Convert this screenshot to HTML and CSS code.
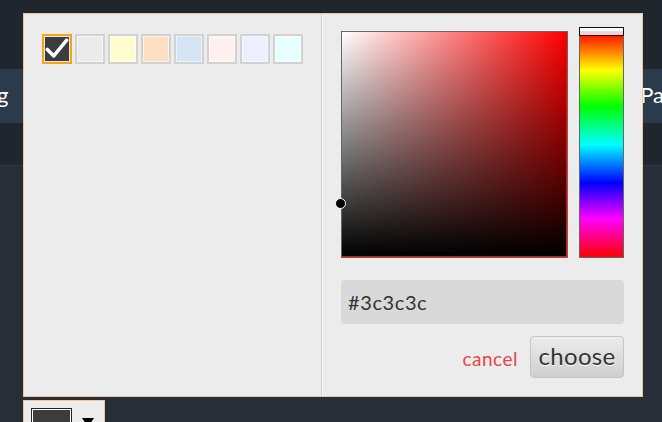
FILE: index.html
```html
<!DOCTYPE html>
<html>
<head>
<meta charset="utf-8">
<link rel="stylesheet" href="styles.css">
</head>
<body>
<div class="page">
  <div class="topbar"></div>
  <div class="navband">
    <span class="nav-left">g</span>
    <span class="nav-right">Pa</span>
  </div>
  <div class="subbar"></div>
  <div class="content"></div>
</div>

<div class="picker">
  <div class="popup">
    <div class="pane-left">
      <div class="swatches">
        <div class="swatch selected" style="background:#3c3c3c">
          <svg viewBox="0 0 26 26" width="24" height="24"><path d="M2.5 13.5 L9.5 20.5 L23.5 3.5" fill="none" stroke="#fff" stroke-width="3.8" stroke-linecap="round" stroke-linejoin="round"/></svg>
        </div>
        <div class="swatch" style="background:#ebebeb"></div>
        <div class="swatch" style="background:#fffdd0"></div>
        <div class="swatch" style="background:#ffdfc4"></div>
        <div class="swatch" style="background:#d5e4f3"></div>
        <div class="swatch" style="background:#fff0ef"></div>
        <div class="swatch" style="background:#ebefff"></div>
        <div class="swatch" style="background:#e6ffff"></div>
      </div>
    </div>
    <div class="divider"></div>
    <div class="pane-right">
      <div class="pickers">
        <div class="sv">
          <div class="sv-grad"></div>
          <div class="sv-marker"></div>
        </div>
        <div class="hue">
          <div class="hue-marker"></div>
        </div>
      </div>
      <div class="hex">#3c3c3c</div>
      <div class="actions">
        <span class="cancel">cancel</span>
        <span class="choose">choose</span>
      </div>
    </div>
  </div>
  <div class="trigger">
    <div class="trigger-swatch"></div>
    <span class="trigger-arrow"></span>
  </div>
</div>
</body>
</html>
```

FILE: styles.css
```css
html, body {
  margin: 0;
  padding: 0;
}
body {
  width: 662px;
  height: 422px;
  overflow: hidden;
  background: #272e37;
  font-family: Lato, "Open Sans", sans-serif;
  position: relative;
}
.page {
  display: flex;
  flex-direction: column;
  height: 422px;
}
.topbar {
  height: 69px;
  background: #20262e;
}
.navband {
  height: 54px;
  background: #2b3b4e;
  display: flex;
  justify-content: space-between;
  align-items: center;
  color: #fff;
  font-size: 22px;
  overflow: hidden;
}
.nav-left {
  margin-left: -3px;
  line-height: 1;
  margin-top: -2px;
}
.nav-right {
  margin-right: -2px;
  line-height: 1;
  margin-top: -2px;
}
.subbar {
  height: 42px;
  background: #20262e;
  border-bottom: 1px solid #2e353e;
}
.content {
  flex: 1;
  background: #272e37;
}

.picker {
  position: absolute;
  left: 23px;
  top: 13px;
  display: flex;
  flex-direction: column;
  gap: 3px;
  align-items: flex-start;
}
.popup {
  width: 618px;
  height: 382px;
  border: 1px solid #f2c59b;
  background: #ececec;
  display: flex;
}
.pane-left {
  width: 298px;
  padding: 20px 0 0 18px;
  box-sizing: border-box;
}
.swatches {
  display: flex;
  gap: 3px;
}
.swatch {
  width: 30px;
  height: 30px;
  box-sizing: border-box;
  border: 2px solid #d2d2d2;
  box-shadow: inset 0 0 0 1px rgba(255,255,255,0.55);
  display: flex;
  align-items: center;
  justify-content: center;
}
.swatch.selected {
  border-color: #f7a21b;
  box-shadow: inset 0 0 0 1px #e8e8e8;
}
.divider {
  width: 1px;
  background: #cfcfcf;
  border-right: 1px solid #f8f8f8;
}
.pane-right {
  flex: 1;
  padding: 17px 18px 0 18px;
  display: flex;
  flex-direction: column;
}
.pickers {
  display: flex;
  gap: 11px;
}
.sv {
  width: 225px;
  height: 225px;
  border: 1px solid #666;
  background: #ff0000;
  position: relative;
}
.sv-grad {
  width: 224px;
  height: 224px;
  background:
    linear-gradient(to top, #000, rgba(0,0,0,0)),
    linear-gradient(to right, #fff, rgba(255,255,255,0));
}
.sv-marker {
  position: absolute;
  left: -7px;
  top: 166px;
  width: 9px;
  height: 9px;
  border-radius: 50%;
  background: #000;
  border: 1px solid #fff;
}
.hue {
  width: 43px;
  height: 225px;
  border: 1px solid #666;
  position: relative;
  background: linear-gradient(to bottom, #f00 0%, #ff0 17%, #0f0 33%, #0ff 50%, #00f 67%, #f0f 83%, #f00 100%);
}
.hue-marker {
  position: absolute;
  left: -1px;
  top: -5px;
  width: 43px;
  height: 7px;
  border: 1px solid #111;
  background: rgba(255,255,255,0.8);
}
.hex {
  margin-top: 22px;
  height: 44px;
  background: #d9d9d9;
  border-radius: 4px;
  display: flex;
  align-items: center;
  padding-left: 7px;
  font-size: 20px;
  color: #333;
  letter-spacing: 0.6px;
}
.actions {
  margin-top: 12px;
  display: flex;
  justify-content: flex-end;
  align-items: center;
  gap: 12px;
}
.cancel {
  color: #e2474b;
  font-size: 19px;
  letter-spacing: 0.5px;
  margin-top: 2px;
}
.choose {
  width: 94px;
  height: 42px;
  box-sizing: border-box;
  border: 1px solid #c4c4c4;
  border-radius: 4px;
  background: linear-gradient(to bottom, #ececec, #cfcfcf);
  display: flex;
  align-items: center;
  justify-content: center;
  padding-bottom: 3px;
  font-size: 24px;
  color: #333;
  text-shadow: 0 1px 0 #fff;
  letter-spacing: 0.3px;
}
.trigger {
  width: 82px;
  height: 30px;
  border: 1px solid #f2c59b;
  background: #ececec;
  display: flex;
  padding: 7px 0 0 7px;
  box-sizing: border-box;
  gap: 10px;
}
.trigger-swatch {
  width: 39px;
  height: 20px;
  border: 1px solid #222;
  box-shadow: inset 0 0 0 1px #fff;
  background: #3c3c3c;
}
.trigger-arrow {
  width: 0;
  height: 0;
  margin-top: 10px;
  border-left: 6px solid transparent;
  border-right: 6px solid transparent;
  border-top: 9px solid #000;
}
```
